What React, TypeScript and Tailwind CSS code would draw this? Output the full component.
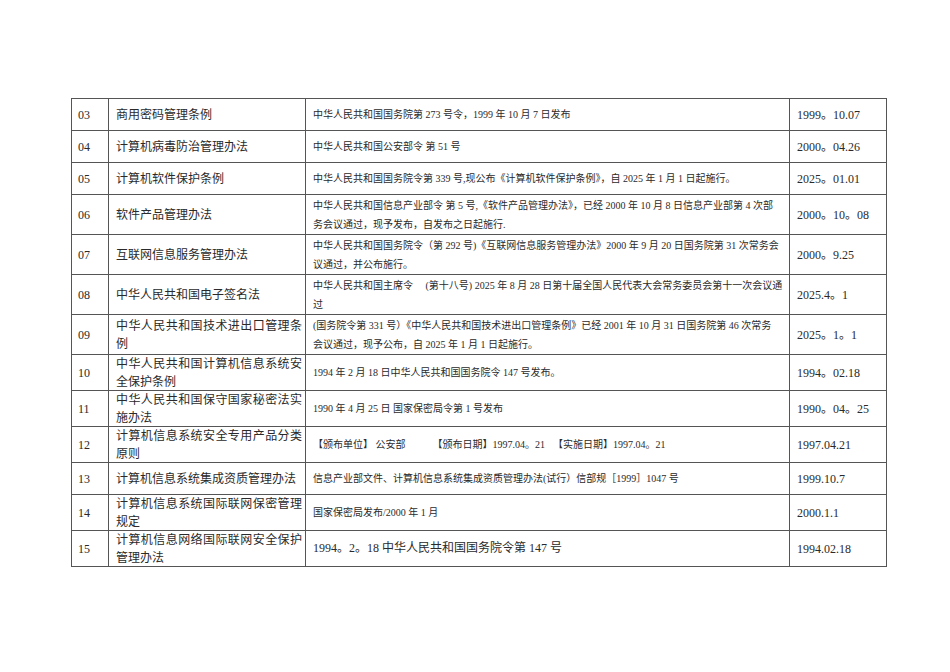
import React from 'react'

type Row = {
  no: string
  name: string
  desc: React.ReactNode[]
  date: string
  h: string
  big?: boolean
}

const rows: Row[] = [
  { no: '03', name: '商用密码管理条例', desc: ['中华人民共和国国务院第 273 号令，1999 年 10 月 7 日发布'], date: '1999。10.07', h: 'h-[32px]' },
  { no: '04', name: '计算机病毒防治管理办法', desc: ['中华人民共和国公安部令 第 51 号'], date: '2000。04.26', h: 'h-[32px]' },
  { no: '05', name: '计算机软件保护条例', desc: ['中华人民共和国国务院令第 339 号,现公布《计算机软件保护条例》，自 2025 年 1 月 1 日起施行。'], date: '2025。01.01', h: 'h-[32px]' },
  {
    no: '06',
    name: '软件产品管理办法',
    desc: ['中华人民共和国信息产业部令 第 5 号,《软件产品管理办法》，已经 2000 年 10 月 8 日信息产业部第 4 次部', '务会议通过，现予发布，自发布之日起施行.'],
    date: '2000。10。08',
    h: 'h-[40px]',
  },
  {
    no: '07',
    name: '互联网信息服务管理办法',
    desc: ['中华人民共和国国务院令（第 292 号)《互联网信息服务管理办法》2000 年 9 月 20 日国务院第 31 次常务会', '议通过，并公布施行。'],
    date: '2000。9.25',
    h: 'h-[40px]',
  },
  {
    no: '08',
    name: '中华人民共和国电子签名法',
    desc: ['中华人民共和国主席令　 (第十八号) 2025 年 8 月 28 日第十届全国人民代表大会常务委员会第十一次会议通', '过'],
    date: '2025.4。1',
    h: 'h-[40px]',
  },
  {
    no: '09',
    name: '中华人民共和国技术进出口管理条例',
    desc: ['(国务院令第 331 号）《中华人民共和国技术进出口管理条例》已经 2001 年 10 月 31 日国务院第 46 次常务', '会议通过，现予公布，自 2025 年 1 月 1 日起施行。'],
    date: '2025。1。1',
    h: 'h-[40px]',
  },
  { no: '10', name: '中华人民共和国计算机信息系统安全保护条例', desc: ['1994 年 2 月 18 日中华人民共和国国务院令 147 号发布。'], date: '1994。02.18', h: 'h-[36px]' },
  { no: '11', name: '中华人民共和国保守国家秘密法实施办法', desc: ['1990 年 4 月 25 日 国家保密局令第 1 号发布'], date: '1990。04。25', h: 'h-[36px]' },
  {
    no: '12',
    name: '计算机信息系统安全专用产品分类原则',
    desc: [
      <>
        【颁布单位】 公安部<span className="ml-[27px]">【颁布日期】1997.04。21</span>
        <span className="ml-[8px]">【实施日期】1997.04。21</span>
      </>,
    ],
    date: '1997.04.21',
    h: 'h-[36px]',
  },
  { no: '13', name: '计算机信息系统集成资质管理办法', desc: ['信息产业部文件、计算机信息系统集成资质管理办法(试行）信部规［1999］1047 号'], date: '1999.10.7', h: 'h-[32px]' },
  { no: '14', name: '计算机信息系统国际联网保密管理规定', desc: ['国家保密局发布/2000 年 1 月'], date: '2000.1.1', h: 'h-[36px]' },
  { no: '15', name: '计算机信息网络国际联网安全保护管理办法', desc: ['1994。2。18 中华人民共和国国务院令第 147 号'], date: '1994.02.18', h: 'h-[36px]', big: true },
]

export default function App() {
  return (
    <div className="min-h-screen w-[950px] bg-white pl-[71px] pt-[98px] font-['Liberation_Serif','Noto_Sans_CJK_SC',serif] text-[#2a2a2a]">
      <table className="w-[815px] table-fixed border-collapse">
        <colgroup>
          <col className="w-[37px]" />
          <col className="w-[197px]" />
          <col className="w-[484px]" />
          <col className="w-[97px]" />
        </colgroup>
        <tbody>
          {rows.map((r) => (
            <tr key={r.no} className={r.h}>
              <td className="border border-[#555] pl-[6px] text-[12px] leading-none">{r.no}</td>
              <td className="border border-[#555] pl-[7px] pr-[3px] text-justify text-[12px] leading-[16px]">
                <div className="flex flex-col gap-[2px]">
                  {splitName(r.name).map((l, i) => (
                    <div key={i} className={l.full ? 'text-justify [text-align-last:justify]' : ''}>
                      {l.text}
                    </div>
                  ))}
                </div>
              </td>
              <td className={`border border-[#555] pl-[7px] ${r.big ? 'text-[12px]' : 'text-[10px]'} whitespace-nowrap`}>
                <div className="flex flex-col gap-[6px] leading-[13px]">
                  {r.desc.map((line, i) => (
                    <div key={i}>{line}</div>
                  ))}
                </div>
              </td>
              <td className="border border-[#555] pl-[7px] text-[12px] leading-none">{r.date}</td>
            </tr>
          ))}
        </tbody>
      </table>
    </div>
  )
}

// names wrap after 15 characters in the source document
function splitName(name: string) {
  const chars = Array.from(name)
  if (chars.length <= 15) return [{ text: name, full: false }]
  return [
    { text: chars.slice(0, 15).join(''), full: true },
    { text: chars.slice(15).join(''), full: false },
  ]
}
